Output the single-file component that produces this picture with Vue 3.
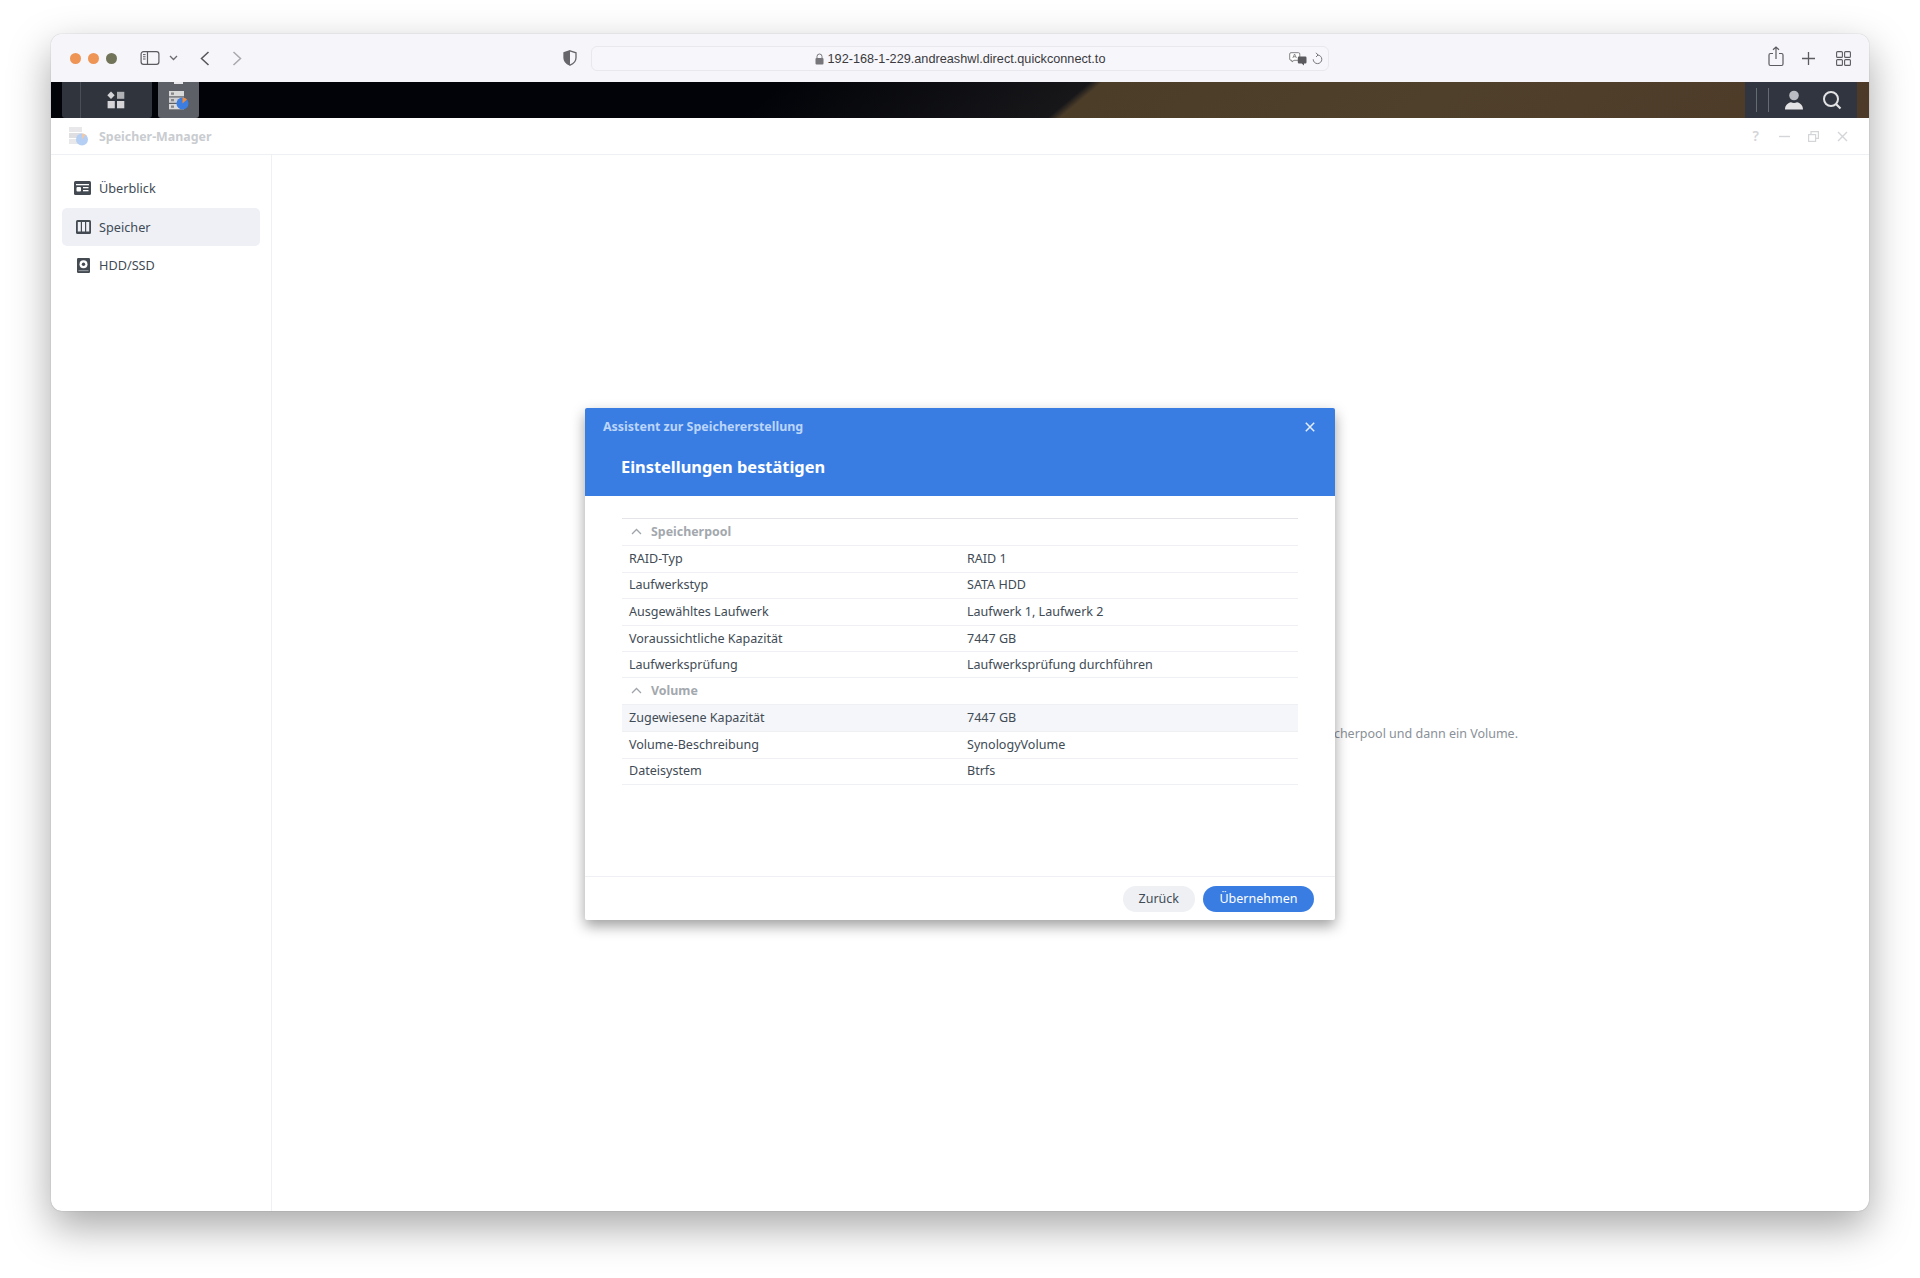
<script setup>
const pools = [
  {
    title: 'Speicherpool',
    rows: [
      ['RAID-Typ', 'RAID 1'],
      ['Laufwerkstyp', 'SATA HDD'],
      ['Ausgewähltes Laufwerk', 'Laufwerk 1, Laufwerk 2'],
      ['Voraussichtliche Kapazität', '7447 GB'],
      ['Laufwerksprüfung', 'Laufwerksprüfung durchführen']
    ]
  },
  {
    title: 'Volume',
    rows: [
      ['Zugewiesene Kapazität', '7447 GB'],
      ['Volume-Beschreibung', 'SynologyVolume'],
      ['Dateisystem', 'Btrfs']
    ]
  }
]
</script>

<template>
  <div class="page">
    <div class="window">
      <!-- Safari toolbar -->
      <div class="toolbar">
        <div class="lights">
          <span class="light"></span>
          <span class="light"></span>
          <span class="light off"></span>
        </div>
        <svg class="tb-sidebar" width="20" height="16" viewBox="0 0 20 16" fill="none" stroke="#5b5b60" stroke-width="1.2">
          <rect x="1.1" y="1.6" width="17.8" height="12.8" rx="2.4" />
          <path d="M7.5 1.6v12.8" />
          <path d="M3 4.6h2.6M3 6.8h2.6M3 9h2.6" stroke-width="1" />
        </svg>
        <svg class="tb-drop" width="9" height="6" viewBox="0 0 9 6" fill="none" stroke="#6a6a6f" stroke-width="1.3">
          <path d="M1 1l3.5 3.5L8 1" />
        </svg>
        <svg class="tb-back" width="10" height="15" viewBox="0 0 10 15" fill="none" stroke="#55555a" stroke-width="1.5">
          <path d="M8.5 1L1.5 7.5l7 6.5" />
        </svg>
        <svg class="tb-forward" width="10" height="15" viewBox="0 0 10 15" fill="none" stroke="#a9a9ad" stroke-width="1.5">
          <path d="M1.5 1l7 6.5-7 6.5" />
        </svg>
        <svg class="tb-shield" width="14" height="16" viewBox="0 0 14 16">
          <path d="M7 .8l6 2v5c0 3.600-2.500 6-6 7.400-3.500-1.400-6-3.800-6-7.400v-5z" fill="none" stroke="#66666b" stroke-width="1.300" />
          <path d="M7 .8l6 2v5c0 3.600-2.500 6-6 7.400z" fill="#66666b" transform="matrix(-1 0 0 1 14 0)" />
        </svg>
        <div class="urlbar">
          <span class="url">
            <svg width="9" height="12" viewBox="0 0 9 12">
              <path d="M2 5V3.500a2.500 2.500 0 015 0V5" fill="none" stroke="#77777b" stroke-width="1" />
              <rect x=".5" y="5" width="8" height="6.500" rx="1" fill="#77777b" />
            </svg>
            192-168-1-229.andreashwl.direct.quickconnect.to
          </span>
          <svg class="translate" width="18" height="14" viewBox="0 0 18 14">
            <path d="M2 .7h7.500a1.300 1.300 0 011.300 1.300v5a1.300 1.300 0 01-1.300 1.300H5L3 10V8.300H2A1.300 1.300 0 01.7 7V2A1.300 1.300 0 012 .7z" fill="#fff" stroke="#77777b" stroke-width=".9" />
            <path d="M3.800 6l1.800-4 1.800 4M4.500 4.700h2.200" fill="none" stroke="#77777b" stroke-width=".8" />
            <path d="M10 4.500h6.300a1.200 1.200 0 011.200 1.200v4.500a1.200 1.200 0 01-1.200 1.200H15v2l-2.300-2H10a1.200 1.200 0 01-1.200-1.200V5.700A1.200 1.200 0 0110 4.500z" fill="#5a5a5f" />
          </svg>
          <svg class="reload" width="11" height="13" viewBox="0 0 11 13" fill="none" stroke="#77777b" stroke-width="1">
            <path d="M5.500 3a4.300 4.300 0 11-4.300 4.300" />
            <path d="M4 .8L6 3 4 5" />
          </svg>
        </div>
        <svg class="tb-share" width="16" height="21" viewBox="0 0 16 21" fill="none" stroke="#5b5b60" stroke-width="1.200">
          <path d="M5 7.500H2.500a1.500 1.500 0 00-1.500 1.500v9a1.500 1.500 0 001.500 1.500h11A1.500 1.500 0 0015 18V9a1.500 1.500 0 00-1.500-1.500H11" />
          <path d="M8 13V1M5 3.800L8 1l3 2.800" />
        </svg>
        <svg class="tb-plus" width="13" height="13" viewBox="0 0 13 13" stroke="#5b5b60" stroke-width="1.300">
          <path d="M6.500 0v13M0 6.500h13" />
        </svg>
        <svg class="tb-grid" width="15" height="15" viewBox="0 0 15 15" fill="none" stroke="#5b5b60" stroke-width="1.100">
          <rect x=".6" y=".6" width="5.800" height="5.800" rx="1" />
          <rect x="8.600" y=".6" width="5.800" height="5.800" rx="1" />
          <rect x=".6" y="8.600" width="5.800" height="5.800" rx="1" />
          <rect x="8.600" y="8.600" width="5.800" height="5.800" rx="1" />
        </svg>
      </div>

      <!-- DSM taskbar -->
      <div class="taskbar">
        <div class="tk-main">
          <svg width="18" height="18" viewBox="0 0 18 18" fill="#d5d5d7">
            <path d="M4 .6L7.700 4.300 4 8 .3 4.300z" />
            <rect x="10" y=".8" width="7.300" height="7" fill="#b0b1b4" />
            <rect x=".6" y="10" width="7.200" height="7.300" />
            <rect x="10" y="10" width="7.300" height="7.300" />
          </svg>
        </div>
        <div class="tk-app">
          <svg width="20" height="19" viewBox="0 0 20 19">
            <rect x="0" y="0" width="15" height="5.300" fill="#d9d9da" />
            <rect x="0" y="6.500" width="15" height="5.300" fill="#cfcfd1" />
            <rect x="0" y="13" width="15" height="5.300" fill="#d9d9da" />
            <rect x="2" y="1.500" width="3" height="2.300" fill="#85878b" />
            <rect x="2" y="8" width="3" height="2.300" fill="#85878b" />
            <rect x="2" y="14.500" width="3" height="2.300" fill="#85878b" />
            <circle cx="13.500" cy="12.500" r="6" fill="#3b7de0" />
            <path d="M13.500 12.500v-6a6 6 0 014.500 2z" fill="#ee8d3c" />
          </svg>
        </div>
        <div class="tk-right">
          <span class="tk-div"></span>
          <span class="tk-div second"></span>
          <svg class="tk-user" width="20" height="20" viewBox="0 0 20 20">
            <circle cx="10" cy="5.500" r="4.800" fill="#b9bcc2" />
            <path d="M1 19.500c0-4.500 3-6.500 6-7.300 1.700 1 4.300 1 6 0 3 .8 6 2.800 6 7.300z" fill="#e3e3e5" />
          </svg>
          <svg class="tk-search" width="20" height="20" viewBox="0 0 20 20" fill="none" stroke="#e3e3e5">
            <circle cx="9" cy="9" r="7" stroke-width="2" />
            <path d="M14 14l4.500 4.500" stroke-width="2.200" />
          </svg>
        </div>
      </div>

      <!-- Speicher-Manager -->
      <div class="app-head">
        <svg class="app-logo" width="21" height="20" viewBox="0 0 21 20">
          <rect x="1" y="1" width="13" height="5" fill="#e8e8ea" />
          <rect x="1" y="7" width="13" height="5" fill="#dfdfe2" />
          <rect x="1" y="13" width="13" height="5" fill="#e8e8ea" />
          <circle cx="14" cy="13.500" r="6" fill="#b5cef3" />
          <path d="M14 13.500v-6a6 6 0 013.600 1.200z" fill="#f2c9a6" />
        </svg>
        <span class="app-title">Speicher-Manager</span>
        <span class="head-tools">
          <span class="help">?</span>
          <svg width="11" height="11" viewBox="0 0 11 11" stroke="#d3d5d8" stroke-width="1.400"><path d="M0 5.500h11" /></svg>
          <svg width="11" height="11" viewBox="0 0 11 11" fill="none" stroke="#d3d5d8" stroke-width="1.200">
            <rect x=".6" y="3.600" width="7" height="6.800" />
            <path d="M3 3.600V.6h7.400v6.800H7.600" />
          </svg>
          <svg width="11" height="11" viewBox="0 0 11 11" stroke="#d3d5d8" stroke-width="1.400"><path d="M1 1l9 9M10 1l-9 9" /></svg>
        </span>
      </div>

      <div class="app-body">
        <nav class="side">
          <div class="nav-item">
            <svg width="17" height="14" viewBox="0 0 17 14">
              <rect width="17" height="14" rx="1.500" fill="#434a52" />
              <rect x="2" y="3" width="13" height="1.300" fill="#fff" />
              <rect x="2.500" y="6" width="4.500" height="4.500" rx="1" fill="#fff" />
              <rect x="9" y="6" width="5.500" height="1.300" fill="#fff" />
              <rect x="9" y="9" width="5.500" height="1.300" fill="#fff" />
            </svg>
            <span>Überblick</span>
          </div>
          <div class="nav-item active">
            <svg width="15" height="14" viewBox="0 0 15 14">
              <rect width="15" height="14" rx="1.500" fill="#434a52" />
              <rect x="1.800" y="2" width="3" height="9.500" fill="#eef0f5" />
              <rect x="6" y="2" width="3" height="9.500" fill="#eef0f5" />
              <rect x="10.200" y="2" width="3" height="9.500" fill="#eef0f5" />
            </svg>
            <span>Speicher</span>
          </div>
          <div class="nav-item">
            <svg width="13" height="15" viewBox="0 0 13 15">
              <rect width="13" height="15" rx="1.200" fill="#434a52" />
              <circle cx="6.500" cy="6.200" r="4" fill="#fff" />
              <circle cx="6.500" cy="6.200" r="1.700" fill="#434a52" />
              <rect x="1.500" y="12" width="10" height="1.200" fill="#8d9298" />
            </svg>
            <span>HDD/SSD</span>
          </div>
        </nav>
        <main class="content">
          <span class="hint">cherpool und dann ein Volume.</span>
        </main>
      </div>

      <!-- Dialog -->
      <div class="dialog">
        <header class="dlg-head">
          <div class="dlg-top">
            <span class="dlg-wizard">Assistent zur Speichererstellung</span>
            <svg width="10" height="10" viewBox="0 0 10 10" stroke="#e4eefc" stroke-width="1.500"><path d="M.8.8l8.400 8.400M9.200.8L.8 9.200" /></svg>
          </div>
          <h1 class="dlg-title">Einstellungen bestätigen</h1>
        </header>
        <div class="dlg-body">
          <section v-for="pool in pools" :key="pool.title" class="pool">
            <div class="pool-head">
              <svg width="11" height="7" viewBox="0 0 11 7" fill="none" stroke="#9fa4aa" stroke-width="1.300"><path d="M1 6l4.500-4.500L10 6" /></svg>
              <span>{{ pool.title }}</span>
            </div>
            <div
              v-for="row in pool.rows"
              :key="row[0]"
              class="row"
              :class="{ hover: row[0] === 'Zugewiesene Kapazität' }"
            >
              <span>{{ row[0] }}</span>
              <span>{{ row[1] }}</span>
            </div>
          </section>
        </div>
        <footer class="dlg-foot">
          <button class="btn">Zurück</button>
          <button class="btn primary">Übernehmen</button>
        </footer>
      </div>
    </div>
  </div>
</template>

<style>
html, body {
  background: #fff;
}
</style>

<style scoped>
.page {
  box-sizing: border-box;
  width: 1920px;
  height: 1278px;
  padding: 34px 51px 67px;
  font-family: "Noto Sans", "Open Sans", sans-serif;
  overflow: hidden;
}
.window {
  position: relative;
  display: flex;
  flex-direction: column;
  height: 100%;
  background: #fff;
  border-radius: 11px;
  box-shadow: 0 0 1px rgba(0, 0, 0, 0.4), 0 16px 42px rgba(0, 0, 0, 0.35);
}

/* toolbar */
.toolbar {
  display: flex;
  align-items: center;
  flex: none;
  height: 48px;
  padding-left: 19px;
  background: #f6f5f9;
  border-radius: 11px 11px 0 0;
}
.lights {
  display: flex;
  gap: 7px;
}
.light {
  width: 11px;
  height: 11px;
  border-radius: 50%;
  background: #ee9455;
}
.light.off {
  background: #72745a;
}
.tb-sidebar {
  margin-left: 23px;
}
.tb-drop {
  margin-left: 9px;
}
.tb-back {
  margin-left: 22px;
}
.tb-forward {
  margin-left: 22px;
}
.tb-shield {
  margin-left: 321px;
}
.urlbar {
  display: flex;
  align-items: center;
  position: relative;
  box-sizing: border-box;
  width: 738px;
  height: 25px;
  margin-left: 14px;
  border: 1px solid #e9e8ec;
  border-radius: 6px;
  background: #f7f6fa;
  justify-content: center;
}
.url {
  display: flex;
  align-items: center;
  gap: 4px;
  padding-top: 2px;
  font-family: "Liberation Sans", sans-serif;
  font-size: 12.700px;
  color: #3a3a3e;
  white-space: nowrap;
}
.translate {
  position: absolute;
  right: 21px;
  top: 5px;
}
.reload {
  position: absolute;
  right: 5px;
  top: 5px;
}
.tb-share {
  margin-left: 439px;
  margin-top: -3px;
}
.tb-plus {
  margin-left: 18px;
}
.tb-grid {
  margin-left: 21px;
}

/* taskbar */
.taskbar {
  display: flex;
  flex: none;
  height: 36px;
  padding-left: 11px;
  background: linear-gradient(140deg, #020308 0, #020308 470px, #17171a 668px, #4c3d29 676px, #4f402b 900px, #4d3a28 1200px);
}
.tk-main {
  display: flex;
  align-items: center;
  justify-content: center;
  position: relative;
  box-sizing: border-box;
  width: 90px;
  padding-left: 18px;
  background: #2f343d;
  border-radius: 0 0 3px 3px;
}
.tk-main::before {
  content: "";
  position: absolute;
  left: 18px;
  top: 0;
  bottom: 0;
  width: 1px;
  background: #4a4e56;
}
.tk-app {
  position: relative;
  display: flex;
  align-items: center;
  justify-content: center;
  width: 41px;
  margin-left: 6px;
  background: #5d6066;
  border-radius: 0 0 3px 3px;
}
.tk-app::before {
  content: "";
  position: absolute;
  left: 16px;
  top: 0;
  width: 9px;
  height: 2px;
  background: #e8e8ea;
}
.tk-right {
  position: relative;
  margin-left: auto;
  margin-right: 12px;
  width: 112px;
  background: #30353f;
}
.tk-div {
  position: absolute;
  left: 11px;
  top: 6px;
  width: 1px;
  height: 24px;
  background: #666a72;
}
.tk-div.second {
  left: 23px;
}
.tk-user {
  position: absolute;
  left: 39px;
  top: 8px;
}
.tk-search {
  position: absolute;
  left: 77px;
  top: 8px;
}

/* app */
.app-head {
  display: flex;
  align-items: center;
  flex: none;
  box-sizing: border-box;
  height: 37px;
  padding: 0 21px 0 17px;
  border-bottom: 1px solid #eff0f4;
}
.app-title {
  margin-left: 10px;
  font-size: 12.400px;
  font-weight: 700;
  color: #c9ccd0;
}
.head-tools {
  display: flex;
  align-items: center;
  gap: 18px;
  margin-left: auto;
}
.help {
  margin-right: 2px;
  font-size: 14px;
  font-weight: 600;
  color: #d3d5d8;
  line-height: 1;
}
.app-body {
  display: flex;
  flex: 1;
  min-height: 0;
}
.side {
  flex: none;
  box-sizing: border-box;
  width: 221px;
  padding: 14px 11px 0;
  border-right: 1px solid #eef0f4;
}
.nav-item {
  display: flex;
  align-items: center;
  height: 38.500px;
  border-radius: 5px;
  font-size: 12.700px;
  color: #414b55;
}
.nav-item svg {
  flex: none;
  margin-left: 13px;
}
.nav-item span {
  position: relative;
  margin-left: 8px;
}
.nav-item.active {
  background: #eef0f5;
}
.nav-item:nth-child(1) svg { margin-left: 12px; }
.nav-item:nth-child(2) svg { margin-left: 14px; }
.nav-item:nth-child(3) svg { margin-left: 15px; }
.nav-item:nth-child(3) span { margin-left: 9px; }
.content {
  flex: 1;
  display: flex;
  align-items: center;
  justify-content: flex-end;
  box-sizing: border-box;
  padding: 101px 351px 0 0;
}
.hint {
  font-size: 12.500px;
  color: #8a9097;
}

/* dialog */
.dialog {
  position: absolute;
  left: 534px;
  top: 374px;
  display: flex;
  flex-direction: column;
  width: 750px;
  height: 512px;
  background: #fff;
  border-radius: 2px;
  box-shadow: 0 6px 14px rgba(0, 0, 0, 0.38);
}
.dlg-head {
  flex: none;
  box-sizing: border-box;
  height: 88px;
  padding: 10px 20px 0 18px;
  background: #397de3;
  border-radius: 2px 2px 0 0;
}
.dlg-top {
  display: flex;
  align-items: center;
  justify-content: space-between;
  height: 17px;
}
.dlg-wizard {
  font-size: 12.450px;
  font-weight: 700;
  color: #bcd5f8;
}
.dlg-title {
  margin: 22px 0 0 18px;
  font-size: 16.400px;
  font-weight: 700;
  line-height: 20px;
  color: #fff;
}
.dlg-body {
  flex: 1;
  margin: 22px 37px 0;
  border-top: 1px solid #e3e5e9;
}
.pool-head {
  display: flex;
  align-items: center;
  box-sizing: border-box;
  height: 26px;
  padding: 0 0 2px 9px;
  font-size: 12.400px;
  font-weight: 700;
  color: #a3a8ae;
}
.pool-head span {
  margin-left: 9px;
}
.row {
  display: grid;
  grid-template-columns: 338px 1fr;
  align-items: center;
  box-sizing: border-box;
  height: 26.600px;
  padding: 0 0 1px 7px;
  border-top: 1px solid #eff0f4;
  font-size: 12.550px;
  color: #414b55;
}
.row:last-child {
  border-bottom: 1px solid #eff0f4;
  height: 27px;
}
.row.hover {
  background: #f5f6f9;
}
.dlg-foot {
  display: flex;
  align-items: center;
  justify-content: flex-end;
  gap: 8px;
  flex: none;
  box-sizing: border-box;
  height: 44px;
  padding: 0 21px 0 0;
  border-top: 1px solid #eff0f4;
}
.btn {
  height: 26px;
  min-width: 72px;
  padding: 0 16px;
  border: 0;
  border-radius: 13px;
  background: #eef0f4;
  font-family: inherit;
  font-size: 12.500px;
  color: #414b55;
}
.btn.primary {
  width: 111px;
  background: #397de3;
  color: #fff;
}
</style>
